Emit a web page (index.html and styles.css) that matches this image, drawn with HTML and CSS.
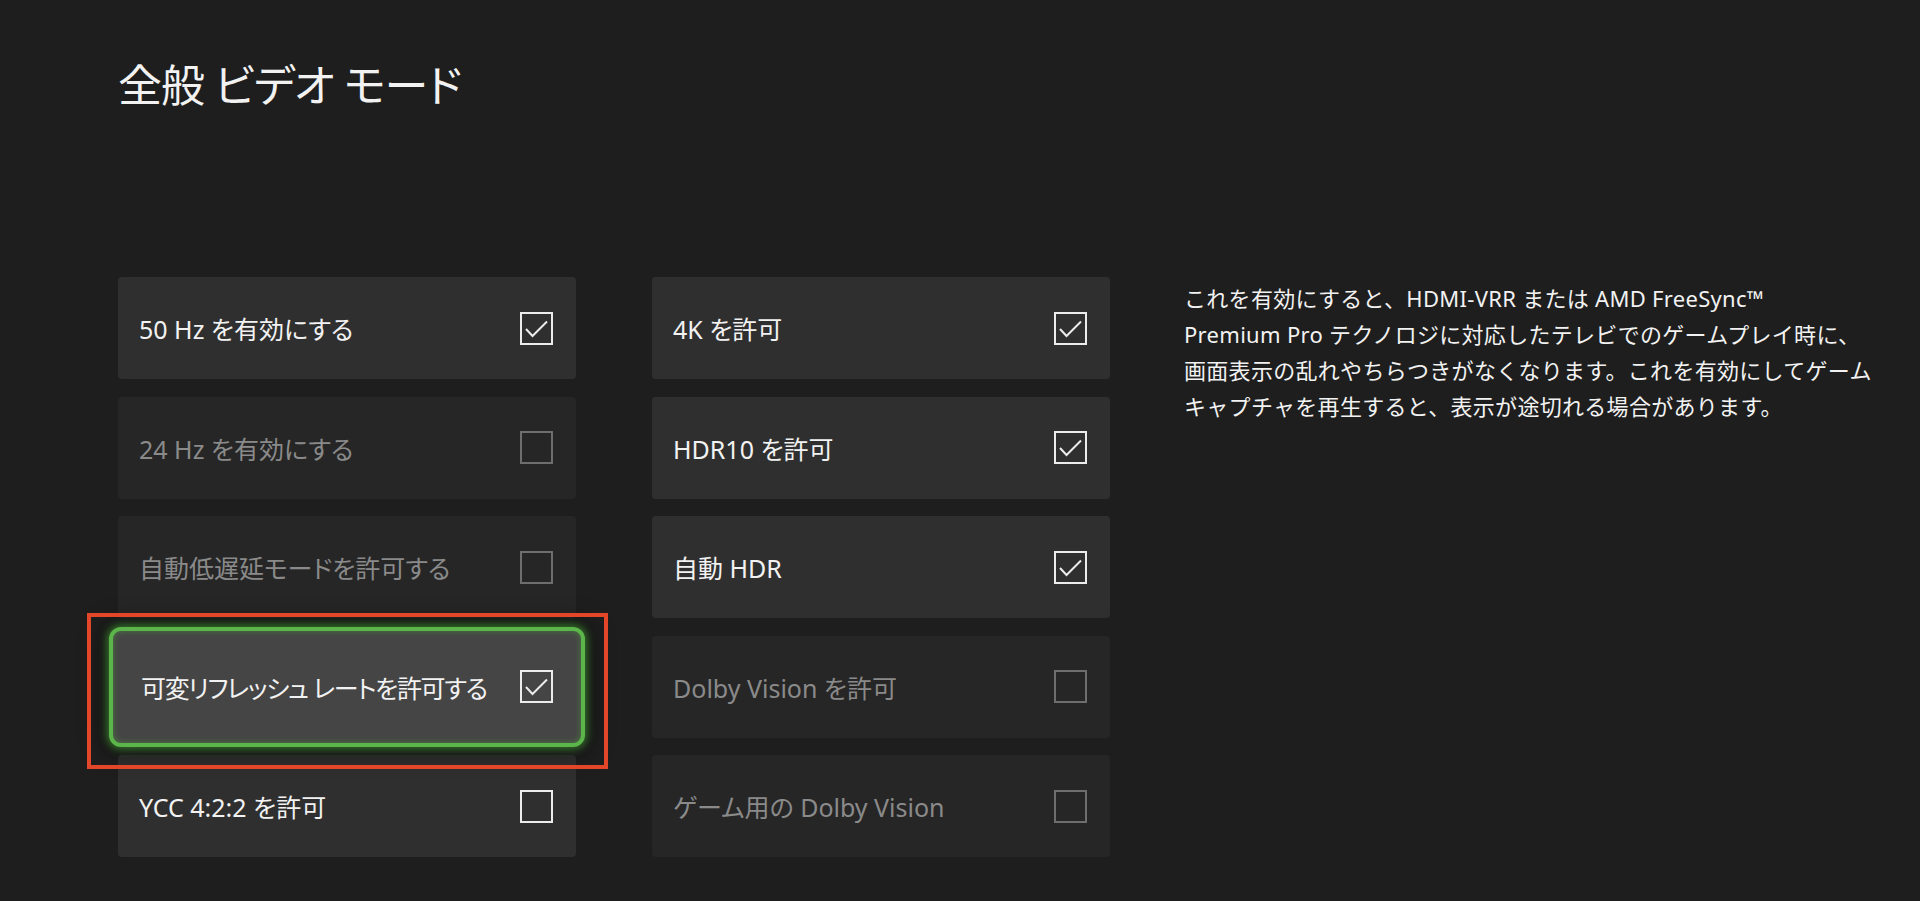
FILE: index.html
```html
<!DOCTYPE html>
<html lang="ja">
<head>
    <meta charset="UTF-8">
    <meta name="viewport" content="width=device-width, initial-scale=1.0">
    <title>全般 ビデオ モード</title>
    <link rel="stylesheet" href="styles.css">
</head>
<body>
    <main class="page">
        <h1 class="page-title">全般 ビデオ モード</h1>

        <div class="settings">
            <div class="column">
                <div class="tile">
                    <span class="tile-label">50 Hz を有効にする</span>
                    <span class="checkbox checked"><svg viewBox="0 0 29 29"><polyline points="4,15 10.5,22 25,7.5"/></svg></span>
                </div>
                <div class="tile disabled">
                    <span class="tile-label">24 Hz を有効にする</span>
                    <span class="checkbox"></span>
                </div>
                <div class="tile disabled">
                    <span class="tile-label">自動低遅延モードを許可する</span>
                    <span class="checkbox"></span>
                </div>
                <!-- focused item, marked with the red box -->
                <div class="tile focused">
                    <span class="tile-label tight">可変リフレッシュ レートを許可する</span>
                    <span class="checkbox checked"><svg viewBox="0 0 29 29"><polyline points="4,15 10.5,22 25,7.5"/></svg></span>
                </div>
                <div class="tile">
                    <span class="tile-label">YCC 4:2:2 を許可</span>
                    <span class="checkbox"></span>
                </div>
            </div>

            <div class="column">
                <div class="tile">
                    <span class="tile-label">4K を許可</span>
                    <span class="checkbox checked"><svg viewBox="0 0 29 29"><polyline points="4,15 10.5,22 25,7.5"/></svg></span>
                </div>
                <div class="tile">
                    <span class="tile-label">HDR10 を許可</span>
                    <span class="checkbox checked"><svg viewBox="0 0 29 29"><polyline points="4,15 10.5,22 25,7.5"/></svg></span>
                </div>
                <div class="tile">
                    <span class="tile-label">自動 HDR</span>
                    <span class="checkbox checked"><svg viewBox="0 0 29 29"><polyline points="4,15 10.5,22 25,7.5"/></svg></span>
                </div>
                <div class="tile disabled">
                    <span class="tile-label">Dolby Vision を許可</span>
                    <span class="checkbox"></span>
                </div>
                <div class="tile disabled">
                    <span class="tile-label">ゲーム用の Dolby Vision</span>
                    <span class="checkbox"></span>
                </div>
            </div>

            <p class="description">
                これを有効にすると、HDMI-VRR または AMD FreeSync™<br>
                Premium Pro テクノロジに対応したテレビでのゲームプレイ時に、<br>
                画面表示の乱れやちらつきがなくなります。これを有効にしてゲーム<br>
                キャプチャを再生すると、表示が途切れる場合があります。
            </p>
        </div>
    </main>
</body>
</html>
```

FILE: styles.css
```css
body {
    margin: 0;
    background-color: #1e1e1e;
    color: #f2f2f2;
    font-family: "Noto Sans", "Noto Sans CJK JP", sans-serif;
}

.page {
    padding: 57px 0 0 118px;
}

.page-title {
    margin: 0;
    font-size: 44px;
    font-weight: 400;
    line-height: 56px;
    font-feature-settings: "palt";
    letter-spacing: -1px;
}

.settings {
    display: flex;
    align-items: flex-start;
    margin-top: 164px;
}

.column {
    width: 458px;
    display: flex;
    flex-direction: column;
    gap: 17.5px;
    margin-right: 76px;
}

.column + .column {
    margin-right: 74px;
}

.tile {
    position: relative;
    height: 102px;
    box-sizing: border-box;
    display: flex;
    align-items: center;
    justify-content: space-between;
    padding: 0 23px 0 21px;
    background-color: #2f2f2f;
    border-radius: 4px;
}

.tile-label {
    font-size: 25px;
    font-feature-settings: "palt";
    white-space: nowrap;
}

.tile-label.tight {
    letter-spacing: -1.3px;
}

.tile.disabled {
    background-color: #262626;
    color: #8a8a8a;
}

.tile.focused {
    height: 120px;
    margin: -9px -9px;
    padding: 0 28px 0 28px;
    background-color: #454545;
    border: 4px solid #5cb54a;
    border-radius: 12px;
    box-shadow: 0 0 9px 2px rgba(80, 190, 60, 0.6), inset 0 0 6px rgba(80, 190, 60, 0.45), 0 0 24px 6px rgba(0, 0, 0, 0.45);
    z-index: 1;
}

/* red annotation box round the focused item */
.tile.focused::after {
    content: "";
    position: absolute;
    top: -18px;
    left: -26px;
    right: -27px;
    bottom: -26px;
    border: 4px solid #e4462a;
    pointer-events: none;
}

.checkbox {
    width: 33px;
    height: 33px;
    box-sizing: border-box;
    border: 2px solid #ececec;
    flex-shrink: 0;
}

.checkbox svg {
    display: block;
    width: 29px;
    height: 29px;
    fill: none;
    stroke: #ececec;
    stroke-width: 2;
}

.disabled .checkbox {
    border-color: #6e6e6e;
}

.description {
    margin: 3px 0 0;
    width: 720px;
    font-size: 22px;
    line-height: 36px;
    letter-spacing: 0.3px;
    color: #f2f2f2;
}
```
